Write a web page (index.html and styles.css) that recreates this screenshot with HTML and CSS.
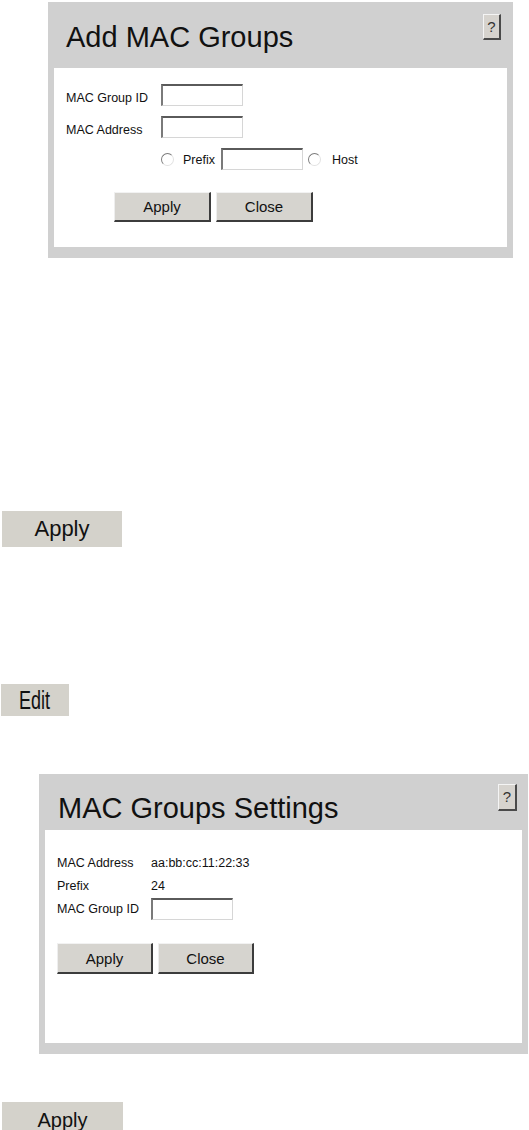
FILE: index.html
```html
<!DOCTYPE html>
<html>
<head>
<meta charset="utf-8">
<title>MAC Groups</title>
<link rel="stylesheet" href="styles.css">
</head>
<body>
<div class="panel panel-add">
  <div class="panel-head">
    <h1 class="panel-title">Add MAC Groups</h1>
    <button class="help" type="button">?</button>
  </div>
  <div class="panel-body">
    <div class="form-grid">
      <label class="lbl">MAC Group ID</label><input class="field" type="text">
      <label class="lbl">MAC Address</label><input class="field" type="text">
      <div class="radio-row">
        <input type="radio" class="radio" name="kind"><span class="opt opt-prefix">Prefix</span><input class="field" type="text"><input type="radio" class="radio radio-host" name="kind"><span class="opt opt-host">Host</span>
      </div>
    </div>
    <div class="btn-row add-btns">
      <button class="pbtn" type="button">Apply</button>
      <button class="pbtn" type="button">Close</button>
    </div>
  </div>
</div>

<button class="sbtn apply-one" type="button">Apply</button>

<button class="sbtn edit-btn" type="button"><span class="narrow">Edit</span></button>

<div class="panel panel-settings">
  <div class="panel-head">
    <h1 class="panel-title">MAC Groups Settings</h1>
    <button class="help" type="button">?</button>
  </div>
  <div class="panel-body">
    <div class="info-grid">
      <span class="ilbl">MAC Address</span><span class="ival">aa:bb:cc:11:22:33</span>
      <span class="ilbl">Prefix</span><span class="ival">24</span>
      <span class="ilbl">MAC Group ID</span><input class="field" type="text">
    </div>
    <div class="btn-row set-btns">
      <button class="pbtn" type="button">Apply</button>
      <button class="pbtn" type="button">Close</button>
    </div>
  </div>
</div>

<button class="sbtn apply-last" type="button">Apply</button>
</body>
</html>
```
FILE: styles.css
```css
html, body {
  margin: 0;
  padding: 0;
  background: #ffffff;
}
body {
  width: 529px;
  font-family: "Liberation Sans", Arial, sans-serif;
  color: #111;
}

.panel {
  background: #d0d0d0;
  display: flex;
  flex-direction: column;
  box-sizing: border-box;
}
.panel-add {
  margin: 2px 0 0 48px;
  width: 465px;
  height: 256px;
}
.panel-settings {
  margin: 58px 0 0 39px;
  width: 489px;
  height: 280px;
}
.panel-head {
  display: flex;
  justify-content: space-between;
  align-items: flex-start;
  box-sizing: border-box;
  flex: none;
}
.panel-add .panel-head {
  height: 66px;
  padding: 12px 12px 0 18px;
}
.panel-add .panel-title {
  margin-top: 7px;
}
.panel-settings .panel-head {
  height: 56px;
  padding: 10px 11px 0 19px;
}
.panel-settings .panel-title {
  margin-top: 8px;
}
.panel-title {
  margin: 0;
  font-size: 29px;
  line-height: 33px;
  font-weight: normal;
  color: #111;
  white-space: nowrap;
}
.help {
  width: 18px;
  height: 26px;
  padding: 0;
  margin: 0;
  background: #d6d3ce;
  border-style: solid;
  border-width: 1px 2px 2px 1px;
  border-color: #f4f4f4 #4a4a4a #4a4a4a #f4f4f4;
  font-family: "Liberation Sans", Arial, sans-serif;
  font-size: 15px;
  line-height: 20px;
  color: #333;
  box-sizing: border-box;
}
.panel-settings .help {
  width: 19px;
  height: 27px;
}

.panel-body {
  flex: 1;
  margin: 0 6px 11px;
  background: #ffffff;
  box-sizing: border-box;
  padding: 16px 0 0 12px;
}
.panel-settings .panel-body {
  padding: 22px 0 0 12px;
}

.form-grid {
  display: grid;
  grid-template-columns: 95px auto;
  grid-auto-rows: 22px;
  row-gap: 10px;
  align-items: center;
  justify-items: start;
}
.lbl {
  font-size: 12.5px;
  line-height: 14px;
  padding-top: 5px;
  white-space: nowrap;
}
.field {
  -webkit-appearance: none;
  appearance: none;
  width: 82px;
  height: 22px;
  box-sizing: border-box;
  margin: 0;
  padding: 0 2px;
  background: #fff;
  border-style: solid;
  border-width: 2px 1px 1px 2px;
  border-color: #5a5a5a #d6d6d6 #d6d6d6 #7a7a7a;
  font-family: "Liberation Sans", Arial, sans-serif;
  font-size: 12px;
}
.radio-row {
  grid-column: 2;
  display: flex;
  align-items: center;
  height: 22px;
}
.radio {
  -webkit-appearance: none;
  appearance: none;
  width: 13px;
  height: 13px;
  margin: 0;
  border-radius: 50%;
  border: 1px solid;
  border-color: #7c7c7c #e2e2e2 #e2e2e2 #7c7c7c;
  background: #fff;
  box-sizing: border-box;
  flex: none;
}
.radio-host {
  margin-left: 5px;
}
.opt {
  font-size: 12.5px;
  line-height: 14px;
  padding-top: 1px;
  white-space: nowrap;
}
.opt-prefix {
  margin: 0 6px 0 9px;
}
.opt-host {
  margin-left: 11px;
}

.info-grid {
  display: grid;
  grid-template-columns: 94px auto;
  grid-auto-rows: 22px;
  row-gap: 1px;
  align-items: center;
  justify-items: start;
}
.ilbl, .ival {
  font-size: 12.5px;
  line-height: 14px;
  white-space: nowrap;
}

.btn-row {
  display: flex;
  gap: 5px;
}
.add-btns {
  margin: 22px 0 0 48px;
}
.set-btns {
  margin: 23px 0 0 0;
}
.pbtn {
  width: 97px;
  height: 30px;
  margin: 0;
  padding: 0;
  background: #d6d4cf;
  border-style: solid;
  border-width: 1px 2px 2px 1px;
  border-color: #f2f2f2 #3c3c3c #3c3c3c #eeeeee;
  box-sizing: border-box;
  font-family: "Liberation Sans", Arial, sans-serif;
  font-size: 15px;
  color: #111;
}
.set-btns .pbtn {
  width: 96px;
  height: 31px;
}

.sbtn {
  display: block;
  margin: 0;
  padding: 0;
  border: none;
  background: #d4d2cb;
  font-family: "Liberation Sans", Arial, sans-serif;
  color: #111;
  text-align: center;
}
.apply-one {
  margin: 253px 0 0 2px;
  width: 120px;
  height: 36px;
  font-size: 22px;
}
.edit-btn {
  margin: 137px 0 0 1px;
  width: 68px;
  height: 32px;
  font-size: 25px;
  line-height: 28px;
}
.narrow {
  display: inline-block;
  transform: scaleX(0.72);
}
.apply-last {
  margin: 48px 0 0 2px;
  width: 121px;
  height: 36px;
  font-size: 20px;
}
```
